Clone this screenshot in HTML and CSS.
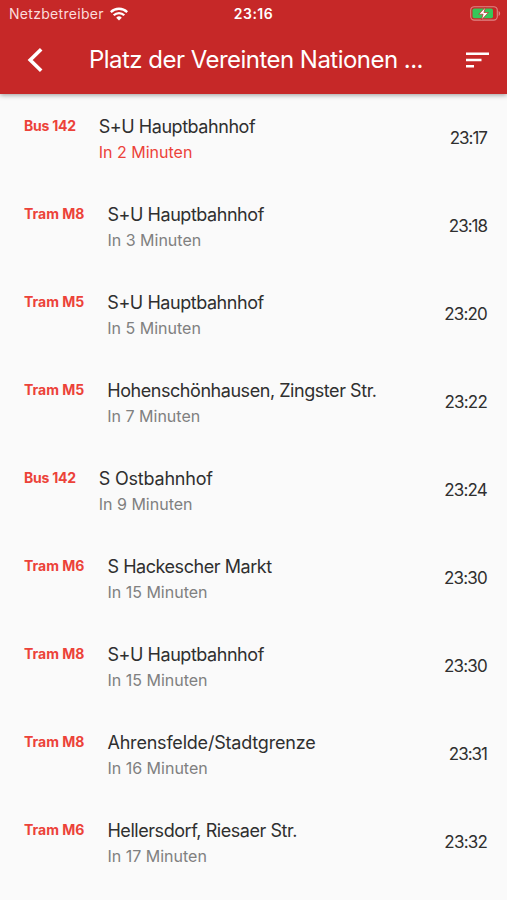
FILE: index.html
```html
<!DOCTYPE html>
<html lang="de">
<head>
<meta charset="utf-8">
<title>Abfahrten</title>
<link rel="stylesheet" href="styles.css">
</head>
<body>
<header class="header">
  <div class="status">
    <div class="carrier"><span>Netzbetreiber</span>
      <svg class="wifi" width="18" height="14" viewBox="0 0 18 14" fill="none" stroke="#fff" stroke-width="2.3"><path d="M.8 5.1a11.7 11.7 0 0 1 16.4 0M3.7 8.3a7.5 7.5 0 0 1 10.6 0"/><path d="M9 13.5 6.2 10.7a4 4 0 0 1 5.6 0Z" fill="#fff" stroke="none"/></svg>
    </div>
    <div class="clock">23:16</div>
    <svg class="battery" width="31" height="15" viewBox="0 0 31 15"><rect x=".7" y=".7" width="26.6" height="13.4" rx="3.6" fill="none" stroke="#df8585" stroke-width="1.1"/><path d="M28.6 5v5c2-.8 2-4.2 0-5Z" fill="#df8585"/><rect x="2.5" y="2.5" width="20.5" height="9.8" rx="1.8" fill="#35c759"/><path d="M15.5 1.2 8.8 8.2h4.3l-1.7 5.7 7-7.4h-4.5Z" fill="#fff" stroke="#c62828" stroke-width=".7"/></svg>
  </div>
  <div class="toolbar">
    <svg class="back" width="18" height="26" viewBox="0 0 18 26" fill="none" stroke="#fff" stroke-width="3.6"><path d="M15.2 2.3 4.2 13l11 10.7"/></svg>
    <h1>Platz der Vereinten Nationen ...</h1>
    <svg class="sort" width="23" height="16" viewBox="0 0 23 16" fill="#fff"><path d="M0 .5h23v2.6H0ZM0 6.7h15.5v2.6H0ZM0 12.9h8v2.6H0Z"/></svg>
  </div>
</header>
<main class="list">
  <div class="row"><div class="line bus">Bus 142</div><div class="trip"><div class="dest">S+U Hauptbahnhof</div><div class="eta soon">In 2 Minuten</div></div><time class="narrow">23:17</time></div>
  <div class="row"><div class="line">Tram M8</div><div class="trip"><div class="dest">S+U Hauptbahnhof</div><div class="eta">In 3 Minuten</div></div><time class="narrow">23:18</time></div>
  <div class="row"><div class="line">Tram M5</div><div class="trip"><div class="dest">S+U Hauptbahnhof</div><div class="eta">In 5 Minuten</div></div><time>23:20</time></div>
  <div class="row"><div class="line">Tram M5</div><div class="trip"><div class="dest">Hohenschönhausen, Zingster Str.</div><div class="eta">In 7 Minuten</div></div><time>23:22</time></div>
  <div class="row"><div class="line bus">Bus 142</div><div class="trip"><div class="dest wide">S Ostbahnhof</div><div class="eta">In 9 Minuten</div></div><time>23:24</time></div>
  <div class="row"><div class="line">Tram M6</div><div class="trip"><div class="dest">S Hackescher Markt</div><div class="eta">In 15 Minuten</div></div><time>23:30</time></div>
  <div class="row"><div class="line">Tram M8</div><div class="trip"><div class="dest">S+U Hauptbahnhof</div><div class="eta">In 15 Minuten</div></div><time>23:30</time></div>
  <div class="row"><div class="line">Tram M8</div><div class="trip"><div class="dest wide">Ahrensfelde/Stadtgrenze</div><div class="eta">In 16 Minuten</div></div><time class="narrow">23:31</time></div>
  <div class="row"><div class="line">Tram M6</div><div class="trip"><div class="dest">Hellersdorf, Riesaer Str.</div><div class="eta">In 17 Minuten</div></div><time>23:32</time></div>
</main>
</body>
</html>
```
FILE: styles.css
```css
* { box-sizing: border-box; }
body {
  margin: 0;
  height: 900px;
  overflow: hidden;
  background: #fafafa;
  color: #2f2f2f;
  font-family: Inter, "Liberation Sans", sans-serif;
  white-space: nowrap;
}
.header {
  position: relative;
  height: 94px;
  background: #c62828;
  color: #fff;
  box-shadow: 0 1px 5px rgba(0, 0, 0, .4);
}
.status {
  display: grid;
  grid-template-columns: 1fr auto 1fr;
  align-items: center;
  height: 27px;
  padding: 0 6px 0 9px;
}
.carrier {
  display: flex;
  align-items: center;
  gap: 6px;
  font-size: 14px;
  letter-spacing: .3px;
  color: #fbdcdc;
}
.clock { margin-right: 3px; font-size: 14px; font-weight: 600; letter-spacing: .5px; }
.battery { justify-self: end; }
.toolbar {
  display: flex;
  align-items: center;
  height: 66px;
  padding: 0 18px 0 26px;
}
h1 {
  flex: 1;
  margin: 0 0 0 45px;
  font-size: 24px;
  line-height: 30px;
  font-weight: 400;
  letter-spacing: -.53px;
}
.list { padding-top: 1px; }
.row {
  display: flex;
  height: 88px;
  padding: 20px 20px 0 24px;
}
.line {
  margin-right: 23px;
  font-size: 14px;
  line-height: 21px;
  font-weight: 700;
  color: #ec4239;
}
.bus { letter-spacing: -.25px; }
.trip { flex: 1; }
.dest { font-size: 18px; line-height: 24px; letter-spacing: -.45px; }
.wide { letter-spacing: -.2px; }
.eta { margin-top: 1px; font-size: 16px; line-height: 24px; color: #808080; }
.soon { color: #ec4239; }
time { margin-top: 11px; font-size: 17px; line-height: 24px; letter-spacing: -.8px; }
.narrow { letter-spacing: -1px; }
```
